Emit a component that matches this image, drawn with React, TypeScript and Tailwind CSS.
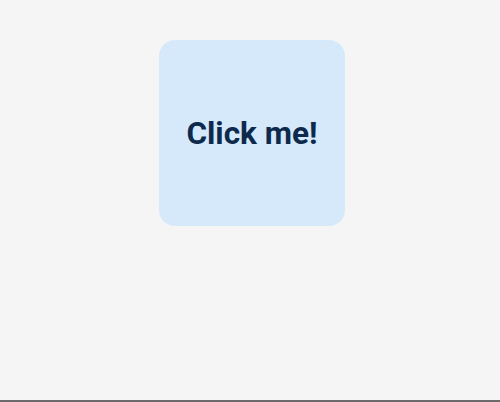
import React from "react";

export default function App() {
  return (
    <div className="h-[402px] w-full bg-[#f5f5f5] border-b-2 border-[#6b6b6b] flex justify-center pl-[4px] pt-[40px]" style={{ fontFamily: "Roboto, 'Liberation Sans', sans-serif" }}>
      <button className="w-[186px] h-[186px] rounded-[16px] bg-[#d6e9fb] flex items-center justify-center pt-[1px] text-[31.5px] font-bold text-[#0d2a4d] leading-none">
        Click me!
      </button>
    </div>
  );
}
